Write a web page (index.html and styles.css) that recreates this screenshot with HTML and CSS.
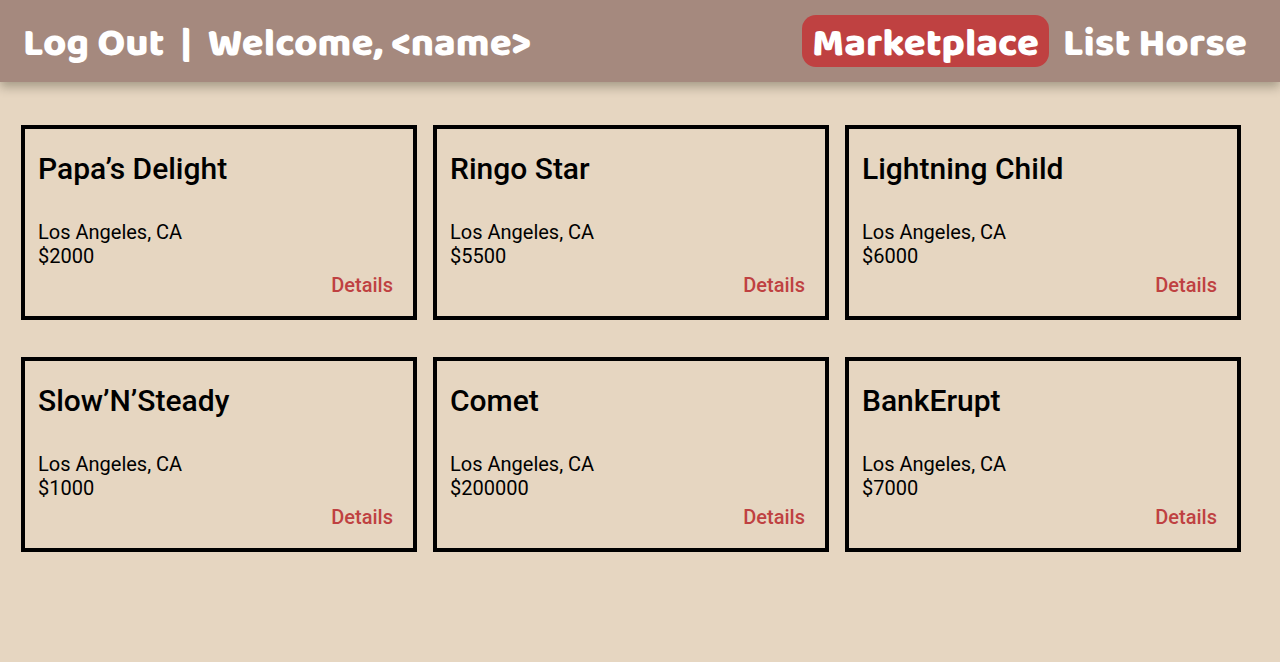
FILE: index.html
```html
<!DOCTYPE html>
<html lang="en">
<head>
<meta charset="utf-8">
<meta name="viewport" content="width=device-width, initial-scale=1">
<title>Marketplace</title>
<link rel="stylesheet" href="styles.css">
</head>
<body>
<header class="bar">
  <div class="account">
    <a class="bar-link" href="#logout">Log Out</a>
    <span class="divider">|</span>
    <span class="welcome">Welcome, &lt;name&gt;</span>
  </div>
  <nav class="nav">
    <a class="nav-link nav-link-active" href="#marketplace" aria-current="page">Marketplace</a>
    <a class="nav-link" href="#list">List Horse</a>
  </nav>
</header>
<main class="listings">
  <article class="card">
    <h2 class="name">Papa’s Delight</h2>
    <p class="info">Los Angeles, CA</p>
    <p class="info">$2000</p>
    <a class="details" href="#papas-delight">Details</a>
  </article>
  <article class="card">
    <h2 class="name">Ringo Star</h2>
    <p class="info">Los Angeles, CA</p>
    <p class="info">$5500</p>
    <a class="details" href="#ringo-star">Details</a>
  </article>
  <article class="card">
    <h2 class="name">Lightning Child</h2>
    <p class="info">Los Angeles, CA</p>
    <p class="info">$6000</p>
    <a class="details" href="#lightning-child">Details</a>
  </article>
  <article class="card">
    <h2 class="name">Slow’N’Steady</h2>
    <p class="info">Los Angeles, CA</p>
    <p class="info">$1000</p>
    <a class="details" href="#slow-n-steady">Details</a>
  </article>
  <article class="card">
    <h2 class="name">Comet</h2>
    <p class="info">Los Angeles, CA</p>
    <p class="info">$200000</p>
    <a class="details" href="#comet">Details</a>
  </article>
  <article class="card">
    <h2 class="name">BankErupt</h2>
    <p class="info">Los Angeles, CA</p>
    <p class="info">$7000</p>
    <a class="details" href="#bankerupt">Details</a>
  </article>
</main>
</body>
</html>
```
FILE: styles.css
```css
* {
  box-sizing: border-box;
}

body {
  margin: 0;
  background: #e6d6c1;
  color: #000;
  font-family: Roboto, sans-serif;
}

a {
  text-decoration: none;
}

.bar {
  display: flex;
  align-items: center;
  justify-content: space-between;
  padding: 15px 23px;
  background: #a5897e;
  box-shadow: 0 5px 10px rgba(20, 20, 0, 0.3);
  color: #fff;
  font-family: "Baloo 2", Baloo, Lato, sans-serif;
  font-size: 40px;
  font-weight: 800;
  line-height: 46px;
  white-space: nowrap;
}

.account {
  display: flex;
  gap: 16px;
  padding-top: 6px;
}

.bar-link,
.nav-link {
  color: inherit;
}

.nav {
  display: flex;
  gap: 4px;
}

.nav-link {
  padding: 6px 10px 0;
  border-radius: 14px;
}

.nav-link-active {
  background: #bf4141;
}

.listings {
  display: grid;
  grid-template-columns: repeat(3, 1fr);
  gap: 37px 16px;
  padding: 43px 39px 43px 21px;
}

.card {
  display: flex;
  flex-direction: column;
  padding: 20px 20px 19px 13px;
  border: 4px solid #000;
}

.name {
  margin: 0 0 31px;
  font-size: 30px;
  font-weight: 500;
  line-height: 40px;
}

.info {
  margin: 0;
  font-size: 20px;
  line-height: 24px;
}

.details {
  align-self: flex-end;
  margin-top: 5px;
  color: #bf4141;
  font-size: 20px;
  font-weight: 500;
  line-height: 24px;
}
```
